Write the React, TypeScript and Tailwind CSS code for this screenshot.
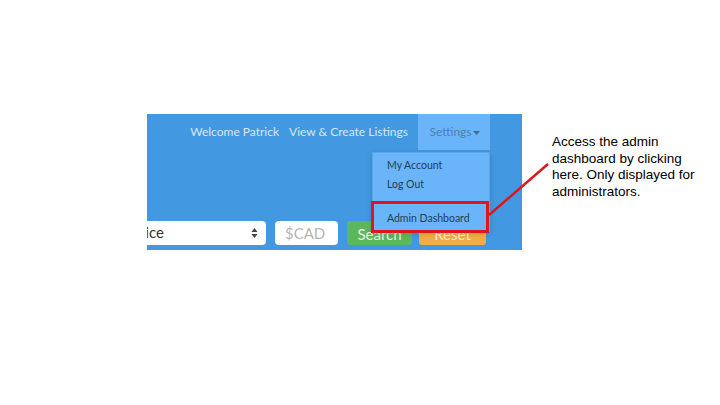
import React from 'react';

const navLinks = ['Welcome Patrick', 'View & Create Listings'];

function SelectArrows() {
    return (
        <svg width="7" height="12" viewBox="0 0 7 12" className="text-[#444]">
            <path d="M3.5 1 L6.5 5 L0.5 5 Z" fill="currentColor" />
            <path d="M3.5 11 L6.5 7 L0.5 7 Z" fill="currentColor" />
        </svg>
    );
}

function Screenshot() {
    return (
        <div className="relative w-[375px] h-[136px] shrink-0 overflow-hidden bg-[#4298e1] font-['Lato','Noto_Sans',sans-serif]">
            {/* Navbar */}
            <div className="flex h-[36px] items-center justify-end pr-[32px] text-[12px]">
                {navLinks.map((link) => (
                    <span key={link} className="mr-[10px] text-[#d4e8fb]">
                        {link}
                    </span>
                ))}
                <div className="relative flex h-full w-[72px] items-center justify-center bg-[#6ab5f9] pl-[1px] text-[#4f7fab]">
                    Settings
                    <svg width="7" height="4" viewBox="0 0 7 4" className="ml-[1px] mt-[2px]">
                        <path d="M0 0 L7 0 L3.5 4 Z" fill="#3f6f99" />
                    </svg>
                </div>
            </div>

            {/* Search form */}
            <div className="mt-[71px] flex h-[24px] items-stretch">
                <div className="-ml-[28px] flex w-[147px] items-center justify-between rounded-[4px] bg-white pl-[12px] pr-[8px] text-[15px] text-[#333]">
                    <span className="-mt-[1px]">Price</span>
                    <SelectArrows />
                </div>
                <div className="ml-[9px] flex w-[63px] items-center rounded-[4px] bg-white pl-[10px] text-[15px] text-[#b5b5b5]">
                    $CAD
                </div>
                <div className="ml-[9px] flex w-[65px] items-center justify-center rounded-[3px] bg-[#5cb85c] pt-[3px] text-[15px] text-[#e6f4e6]">
                    Search
                </div>
                <div className="ml-[7px] flex w-[67px] items-center justify-center rounded-[3px] bg-[#f2ae43] pt-[3px] text-[15px] text-[#fbebd2]">
                    Reset
                </div>
            </div>

            {/* Settings dropdown */}
            <div className="absolute left-[225px] top-[38px] w-[118px] border border-[#5aa5e8] bg-[#6ab5f9] pt-[3px] pb-[3px] text-[10.5px] text-[#233d57] shadow-[0_2px_6px_rgba(0,0,0,0.15)]">
                <div className="pl-[14px] leading-[19px]">My Account</div>
                <div className="pl-[14px] leading-[19px]">Log Out</div>
                <div className="my-[7px] h-px bg-[#5aa5e8]" />
                <div className="pl-[14px] leading-[19px]">Admin Dashboard</div>
            </div>

            {/* Annotation box */}
            <div className="absolute left-[224px] top-[87px] h-[32px] w-[118px] border-[3px] border-[#e0141b]" />
        </div>
    );
}

export default function App() {
    return (
        <div className="relative h-[405px] w-[720px] overflow-hidden bg-white">
            <div className="flex pl-[147px] pt-[114px]">
                <Screenshot />
                <p className="ml-[30px] mt-[20px] w-[160px] font-['Liberation_Sans','Arial',sans-serif] text-[13.5px] leading-[16.5px] text-black">
                    Access the admin dashboard by clicking here. Only displayed for administrators.
                </p>
            </div>
            <svg className="pointer-events-none absolute left-0 top-0" width="720" height="405">
                <line x1="489" y1="215" x2="548" y2="164" stroke="#e0141b" strokeWidth="2.5" />
            </svg>
        </div>
    );
}
